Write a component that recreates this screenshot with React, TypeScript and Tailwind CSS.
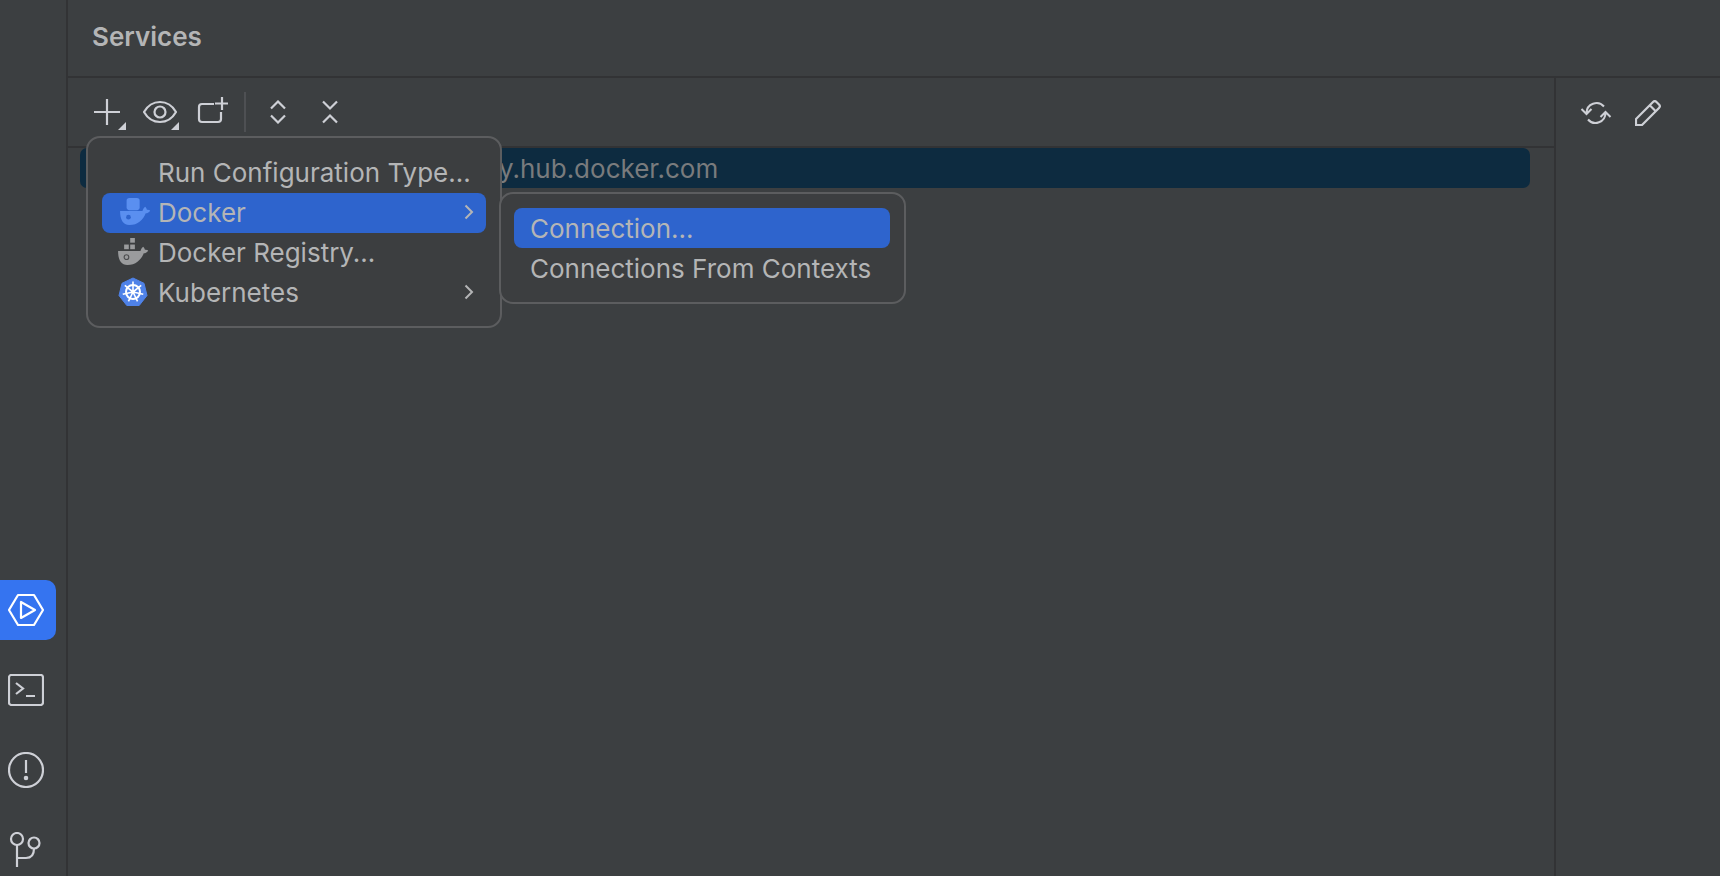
const iconClass = "fill-none stroke-[#ced0d6] stroke-[2.2]";

function Whale({ color, eye, active }: { color: string; eye: string; active?: boolean }) {
  return (
    <svg width="32" height="28" viewBox="0 0 34 30">
      {active ? (
        <rect x="8" y="0" width="14" height="13" rx="3" fill={color} />
      ) : (
        <g fill={color}>
          <rect x="14" y="0" width="5" height="5" />
          <rect x="7.5" y="7" width="5" height="5" />
          <rect x="14" y="7" width="5" height="5" />
        </g>
      )}
      <path
        d="M1 14h24c.5-2 1.500-3.500 3-4.500 1 1 1.500 2 1.800 3.200 1.200-.2 2.400 0 3.500.6-1 2-2.800 3-4.800 3C26 23 20 29 11 29 4 29 1 23 1 14z"
        fill={color}
      />
      <circle cx="10" cy="20.500" r="2.500" fill={active ? eye : "none"} stroke={active ? "none" : eye} strokeWidth="1.200" />
    </svg>
  );
}

function KubeIcon() {
  const spokes = [0, 51.4, 102.8, 154.3, 205.7, 257.1, 308.6];
  return (
    <svg width="30" height="30" viewBox="0 0 30 30">
      <path d="M15 1l11 5.300 3 12.200-7.800 10H8.800L1 18.500 4 6.300z" fill="#4f82e8" stroke="#4f82e8" strokeLinejoin="round" />
      <circle cx="15" cy="15" r="7" fill="none" stroke="#fff" strokeWidth="2" />
      <circle cx="15" cy="15" r="2" fill="#fff" />
      {spokes.map((a) => (
        <line key={a} x1="15" y1="15" x2="15" y2="4.500" stroke="#fff" strokeWidth="1.600" transform={`rotate(${a} 15 15)`} />
      ))}
    </svg>
  );
}

function Chevron() {
  return (
    <svg width="10" height="16" viewBox="0 0 10 16" className="fill-none stroke-[#b4b5b6] stroke-2">
      <path d="M1.500 1.500L8 8l-6.500 6.500" />
    </svg>
  );
}

function Corner() {
  return <span className="absolute right-[-1px] bottom-0 h-0 w-0 border-b-[8px] border-l-[8px] border-b-[#ced0d6] border-l-transparent" />;
}

function ToolButton({ children, corner }: { children: React.ReactNode; corner?: boolean }) {
  return (
    <div className="relative flex h-9 w-9 shrink-0 items-center justify-center">
      {children}
      {corner && <Corner />}
    </div>
  );
}

function RailIcon({ children, active }: { children: React.ReactNode; active?: boolean }) {
  return (
    <div className={`flex h-[60px] w-14 items-center justify-center rounded-r-[10px] pr-1 ${active ? "bg-[#3574f0]" : ""}`}>
      {children}
    </div>
  );
}

export default function App() {
  return (
    <div className="relative flex h-[876px] w-[1720px] overflow-hidden bg-[#3c3f41] font-['Inter',sans-serif] text-[26px] text-[#b4b5b6]">
      <aside className="-mb-1 flex w-[68px] shrink-0 flex-col justify-end gap-5 border-r-2 border-[#323335]">
        <RailIcon active>
          <svg width="38" height="34" viewBox="0 0 38 34" className="fill-none stroke-white stroke-[2.2]">
            <path d="M11 2h16l9 15-9 15H11L2 17z" strokeLinejoin="round" />
            <path d="M14 9v16l14-8z" strokeLinejoin="round" />
          </svg>
        </RailIcon>
        <RailIcon>
          <svg width="36" height="32" viewBox="0 0 36 32" className={iconClass}>
            <rect x="1" y="1" width="34" height="30" rx="2.500" />
            <path d="M8 9l7 5.500L8 20M18 22h9" />
          </svg>
        </RailIcon>
        <RailIcon>
          <svg width="36" height="36" viewBox="0 0 36 36" className={iconClass}>
            <circle cx="18" cy="18" r="17" />
            <path d="M18 8v13" />
            <circle cx="18" cy="26" r="1.200" fill="#ced0d6" />
          </svg>
        </RailIcon>
        <RailIcon>
          <svg width="34" height="36" viewBox="0 0 34 36" className={iconClass}>
            <circle cx="8" cy="7" r="6" />
            <circle cx="25" cy="11" r="5.500" />
            <path d="M8 13v22M8 26h9c5 0 8-3 8-9.500" />
          </svg>
        </RailIcon>
      </aside>

      <main className="flex min-w-0 flex-1 flex-col">
        <header className="flex h-[78px] shrink-0 items-center border-b-2 border-[#323335] pl-6 text-[26px] leading-none font-semibold">
          <span className="mb-[2px]">Services</span>
        </header>
        <div className="flex min-h-0 flex-1">
          <section className="flex w-[1488px] shrink-0 flex-col border-r-2 border-[#323335]">
            <div className="flex h-[70px] shrink-0 items-center border-b-2 border-[#323335] pl-[21px]">
              <div className="flex items-center gap-[17px]">
                <ToolButton corner>
                  <svg width="26" height="26" viewBox="0 0 26 26" className={iconClass}>
                    <path d="M13 0v26M0 13h26" />
                  </svg>
                </ToolButton>
                <ToolButton corner>
                  <svg width="34" height="24" viewBox="0 0 34 24" className={iconClass}>
                    <path d="M1 12C5 5 11 2 17 2s12 3 16 10c-4 7-10 10-16 10S5 19 1 12z" />
                    <circle cx="17" cy="12" r="5.500" />
                  </svg>
                </ToolButton>
                <ToolButton>
                  <svg width="32" height="32" viewBox="0 0 32 32" className={iconClass}>
                    <path d="M17 8H5a3 3 0 0 0-3 3v12a3 3 0 0 0 3 3h16a3 3 0 0 0 3-3V16M25 1v13M18 7.500h13" />
                  </svg>
                </ToolButton>
              </div>
              <div className="ml-[13px] h-10 w-[2px] bg-[#4e5053]" />
              <div className="ml-[14px] flex items-center gap-4">
                <ToolButton>
                  <svg width="16" height="24" viewBox="0 0 16 24" className={iconClass}>
                    <path d="M1 8.500L8 1.500l7 7M1 15.500l7 7 7-7" />
                  </svg>
                </ToolButton>
                <ToolButton>
                  <svg width="16" height="24" viewBox="0 0 16 24" className={iconClass}>
                    <path d="M1 1.500l7 7 7-7M1 22.500l7-7 7 7" />
                  </svg>
                </ToolButton>
              </div>
            </div>
            <div className="pl-3">
              <div className="flex h-10 w-[1450px] items-center rounded-[7px] bg-[#0d2b40] pl-[419px] text-[#797b7d]">
                y.hub.docker.com
              </div>
            </div>
          </section>
          <section className="flex h-[70px] flex-1 items-center gap-4 pl-[22px]">
            <ToolButton>
              <svg width="32" height="26" viewBox="0 0 32 26" className="fill-none stroke-[#ced0d6] stroke-2">
                <path d="M6.500 13A10 10 0 0 1 24 6.500M25.500 13A10 10 0 0 1 8 19.500M1.500 9l5 5 5-5M20.500 17l5-5 5 5" />
              </svg>
            </ToolButton>
            <ToolButton>
              <svg width="26" height="26" viewBox="0 0 26 26" className={iconClass}>
                <path d="M1 25v-6L18 2a2.500 2.500 0 0 1 3.500 0l2.500 2.500a2.500 2.500 0 0 1 0 3.500L7 25zM15 5.500l5.500 5.500" />
              </svg>
            </ToolButton>
          </section>
        </div>
      </main>

      <div className="absolute top-[136px] left-[86px] flex h-[192px] w-[416px] flex-col rounded-[14px] border-2 border-[#5c5d5f] bg-[#3c3e40] px-[14px] pt-[15px]">
        <div className="flex h-10 items-center pb-[2px] pl-[56px]">Run Configuration Type...</div>
        <div className="flex h-10 items-center justify-between rounded-[8px] bg-[#2e64cd] pr-3 pb-[2px]">
          <div className="flex items-center">
            <span className="flex w-[56px] justify-center pl-[9px]">
              <Whale color="#5a8ff0" eye="#2e64cd" active />
            </span>
            Docker
          </div>
          <Chevron />
        </div>
        <div className="flex h-10 items-center pb-[2px]">
          <span className="flex w-[56px] justify-center pl-[5px]">
            <Whale color="#9a9b9d" eye="#4c4d4f" />
          </span>
          Docker Registry...
        </div>
        <div className="flex h-10 items-center justify-between pr-3 pb-[2px]">
          <div className="flex items-center">
            <span className="flex w-[56px] justify-center pl-[5px]">
              <KubeIcon />
            </span>
            Kubernetes
          </div>
          <Chevron />
        </div>
      </div>

      <div className="absolute top-[192px] left-[499px] flex h-[112px] w-[407px] flex-col rounded-[14px] border-2 border-[#5c5d5f] bg-[#3c3e40] pt-[14px] pr-[14px] pl-[13px]">
        <div className="flex h-10 items-center rounded-[8px] bg-[#2e64cd] pl-4">Connection...</div>
        <div className="flex h-10 items-center pl-4">Connections From Contexts</div>
      </div>
    </div>
  );
}
